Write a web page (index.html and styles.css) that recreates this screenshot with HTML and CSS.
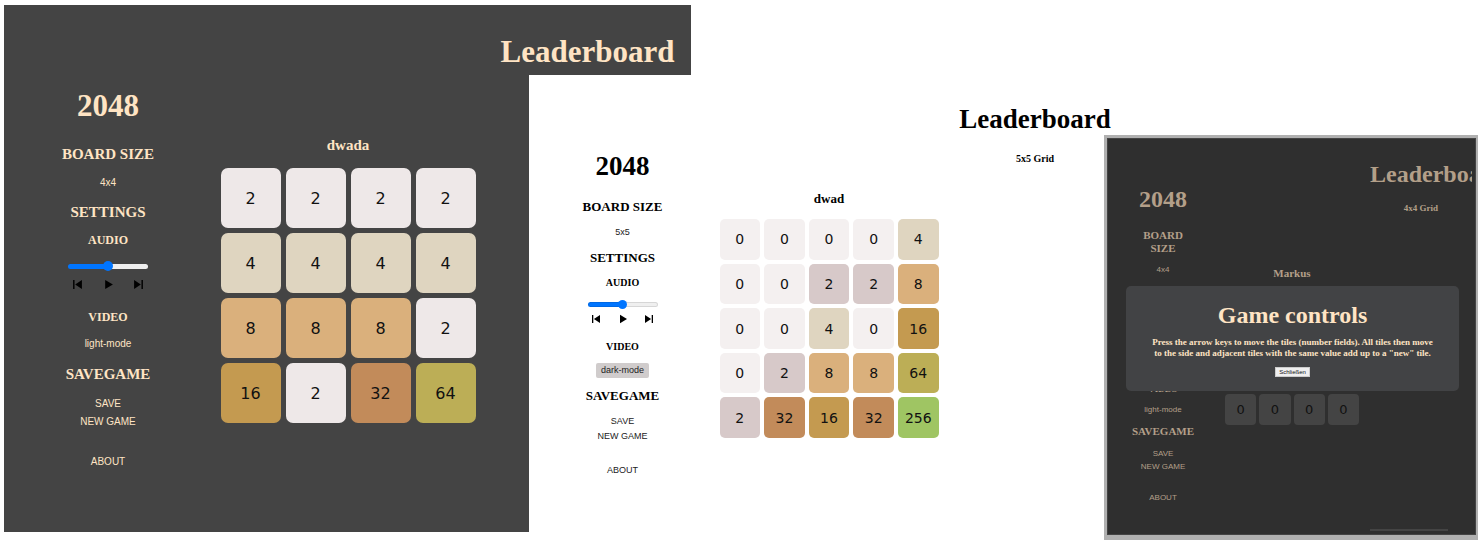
FILE: index.html
```html
<!DOCTYPE html>
<html lang="en">
<head>
<meta charset="utf-8">
<title>2048</title>
<link rel="stylesheet" href="styles.css">
</head>
<body>
<svg class="sprite" aria-hidden="true">
  <symbol id="prev" viewBox="0 0 10 10"><path d="M1 1h1.3v8H1zM9 1v8L2.9 5z"/></symbol>
  <symbol id="play" viewBox="0 0 10 10"><path d="M2 .8v8.4L9 5z"/></symbol>
  <symbol id="next" viewBox="0 0 10 10"><path d="M7.7 1H9v8H7.7zM1 1v8l6.1-4z"/></symbol>
</svg>
<main class="stage">
  <section class="window window-dark">
    <nav class="sidebar">
      <h1 class="title">2048</h1>
      <h2 class="heading first">BOARD SIZE</h2>
      <button class="item">4x4</button>
      <h2 class="heading">SETTINGS</h2>
      <h3 class="subheading">AUDIO</h3>
      <input class="volume" type="range" aria-label="Volume" value="50">
      <div class="player">
        <button class="control" aria-label="Previous"><svg class="icon"><use href="#prev"/></svg></button>
        <button class="control" aria-label="Play"><svg class="icon"><use href="#play"/></svg></button>
        <button class="control" aria-label="Next"><svg class="icon"><use href="#next"/></svg></button>
      </div>
      <h3 class="subheading video">VIDEO</h3>
      <button class="item">light-mode</button>
      <h2 class="heading savegame">SAVEGAME</h2>
      <button class="item save">SAVE</button>
      <button class="item follow">NEW GAME</button>
      <a class="item about" href="#about">ABOUT</a>
    </nav>
    <section class="game">
      <h2 class="player-name">dwada</h2>
      <div class="board size-4">
        <span class="tile t2">2</span><span class="tile t2">2</span><span class="tile t2">2</span><span class="tile t2">2</span>
        <span class="tile t4">4</span><span class="tile t4">4</span><span class="tile t4">4</span><span class="tile t4">4</span>
        <span class="tile t8">8</span><span class="tile t8">8</span><span class="tile t8">8</span><span class="tile t2">2</span>
        <span class="tile t16">16</span><span class="tile t2">2</span><span class="tile t32">32</span><span class="tile t64">64</span>
      </div>
    </section>
    <aside class="scores">
      <h1 class="title">Leaderboard</h1>
    </aside>
  </section>

  <section class="window window-light">
    <nav class="sidebar">
      <h1 class="title">2048</h1>
      <h2 class="heading first">BOARD SIZE</h2>
      <button class="item">5x5</button>
      <h2 class="heading">SETTINGS</h2>
      <h3 class="subheading">AUDIO</h3>
      <input class="volume" type="range" aria-label="Volume" value="50">
      <div class="player">
        <button class="control" aria-label="Previous"><svg class="icon"><use href="#prev"/></svg></button>
        <button class="control" aria-label="Play"><svg class="icon"><use href="#play"/></svg></button>
        <button class="control" aria-label="Next"><svg class="icon"><use href="#next"/></svg></button>
      </div>
      <h3 class="subheading video">VIDEO</h3>
      <button class="item hovered">dark-mode</button>
      <h2 class="heading savegame">SAVEGAME</h2>
      <button class="item save">SAVE</button>
      <button class="item follow">NEW GAME</button>
      <a class="item about" href="#about">ABOUT</a>
    </nav>
    <section class="game">
      <h2 class="player-name">dwad</h2>
      <div class="board size-5">
        <span class="tile t0">0</span><span class="tile t0">0</span><span class="tile t0">0</span><span class="tile t0">0</span><span class="tile t4">4</span>
        <span class="tile t0">0</span><span class="tile t0">0</span><span class="tile t2">2</span><span class="tile t2">2</span><span class="tile t8">8</span>
        <span class="tile t0">0</span><span class="tile t0">0</span><span class="tile t4">4</span><span class="tile t0">0</span><span class="tile t16">16</span>
        <span class="tile t0">0</span><span class="tile t2">2</span><span class="tile t8">8</span><span class="tile t8">8</span><span class="tile t64">64</span>
        <span class="tile t2">2</span><span class="tile t32">32</span><span class="tile t16">16</span><span class="tile t32">32</span><span class="tile t256">256</span>
      </div>
    </section>
    <aside class="scores">
      <h1 class="title">Leaderboard</h1>
      <h3 class="subheading">5x5 Grid</h3>
    </aside>
  </section>

  <section class="window window-dimmed">
    <nav class="sidebar">
      <h1 class="title">2048</h1>
      <h2 class="heading first">BOARD SIZE</h2>
      <button class="item">4x4</button>
      <h3 class="subheading video">VIDEO</h3>
      <button class="item">light-mode</button>
      <h2 class="heading savegame">SAVEGAME</h2>
      <button class="item save">SAVE</button>
      <button class="item follow">NEW GAME</button>
      <a class="item about" href="#about">ABOUT</a>
    </nav>
    <section class="game">
      <h2 class="player-name">Markus</h2>
      <div class="board size-4">
        <span class="tile t0"></span><span class="tile t0"></span><span class="tile t0"></span><span class="tile t0"></span>
        <span class="tile t0"></span><span class="tile t0"></span><span class="tile t0"></span><span class="tile t0"></span>
        <span class="tile t0"></span><span class="tile t0"></span><span class="tile t0"></span><span class="tile t0"></span>
        <span class="tile t0">0</span><span class="tile t0">0</span><span class="tile t0">0</span><span class="tile t0">0</span>
      </div>
    </section>
    <aside class="scores">
      <h1 class="title">Leaderboard</h1>
      <h3 class="subheading">4x4 Grid</h3>
      <div class="divider"></div>
    </aside>
    <dialog class="dialog" open aria-labelledby="dialog-title">
      <h1 class="title" id="dialog-title">Game controls</h1>
      <p class="dialog-text">Press the arrow keys to move the tiles (number fields). All tiles then move to the side and adjacent tiles with the same value add up to a "new" tile.</p>
      <button class="close">Schließen</button>
    </dialog>
  </section>
</main>
</body>
</html>
```
FILE: styles.css
```css
* { box-sizing: border-box; }

body {
  margin: 0;
  background: #fff;
  font-family: "Liberation Serif", "Times New Roman", serif;
}

h1, h2, h3, p { margin: 0; }

button {
  margin: 0;
  padding: 0;
  border: 0;
  background: none;
  color: inherit;
  font-family: "Liberation Sans", Arial, sans-serif;
}

.sprite { display: none; }

/* The three windows share one grid and overlap in its cells. */
.stage {
  display: grid;
  grid-template-columns: 4px minmax(0, 525fr) minmax(0, 162fr) minmax(0, 413fr) minmax(0, 374fr);
  grid-template-rows: 5px 70px 60px 1fr;
  min-height: 100vh;
}

.window {
  display: grid;
  align-items: start;
  color: var(--text);
  background: var(--page);
}

.window-dark {
  --text: #ffe4c4;
  --page: #444;
  --title: 31px; --title-line: 36px;
  --heading: 15px; --heading-line: 20px;
  --sub: 12px; --sub-line: 16px;
  --item: 10px; --item-line: 18px;
  --gap: 10px; --title-gap: 20px; --video-gap: 19px; --save-gap: 11px; --about-gap: 22px;
  --slider: 80px; --slider-line: 16px; --thumb: 10px; --track: 5px;
  --player: 72px; --player-gap: 5px; --icon: 11px;
  --tile: 16px; --tile-gap: 5px; --tile-radius: 7px; --board: 255px; --board-gap: 13px;
  grid-area: 2 / 2 / 5 / 4;
  grid-template-columns: 208fr 272fr 207fr;
  margin-bottom: 8px;
}

.window-light {
  --text: #000;
  --page: #fff;
  --title: 27px; --title-line: 30px;
  --heading: 13px; --heading-line: 18px;
  --sub: 10px; --sub-line: 14px;
  --item: 9px; --item-line: 15px;
  --gap: 9px; --title-gap: 17px; --video-gap: 16px; --save-gap: 9px; --about-gap: 19px;
  --slider: 70px; --slider-line: 12px; --thumb: 9px; --track: 5px;
  --player: 63px; --player-gap: 4px; --icon: 10px;
  --tile: 14px; --tile-gap: 4px; --tile-radius: 5px; --board: 219px; --board-gap: 11px;
  grid-area: 3 / 3 / 5 / 6;
  grid-template-columns: 187fr 226fr 186fr 350fr;
}

.window-dimmed {
  --text: #b39f89;
  --page: #2f2f2f;
  --title: 24px; --title-line: 28px;
  --heading: 11px; --heading-line: 13px;
  --sub: 9px; --sub-line: 12px;
  --item: 8px; --item-line: 13px;
  --gap: 8px; --title-gap: 16px; --video-gap: 107px; --save-gap: 9px; --about-gap: 18px;
  --tile: 13px; --tile-gap: 3px; --tile-radius: 4px; --board: 134px; --board-gap: 11px;
  position: relative;
  grid-area: 4 / 5 / 5 / 6;
  grid-template-columns: 112fr 146fr 111fr;
  border: solid #b0b0b0;
  border-width: 3px 2px 5px 3px;
  box-shadow: inset 0 0 0 1px #444;
}

.sidebar {
  display: flex;
  flex-direction: column;
  align-items: center;
  text-align: center;
}

.window-dark .sidebar { padding-top: 83px; }
.window-light .sidebar { padding-top: 76px; }
.window-dimmed .sidebar { padding: 47px 24px 0; }

.title { font-size: var(--title); line-height: var(--title-line); white-space: nowrap; }
.heading { margin-top: var(--gap); font-size: var(--heading); line-height: var(--heading-line); }
.heading.first { margin-top: var(--title-gap); }
.heading.savegame { margin-top: var(--save-gap); }
.subheading { margin-top: var(--gap); font-size: var(--sub); line-height: var(--sub-line); }
.subheading.video { margin-top: var(--video-gap); }

.item {
  margin-top: var(--gap);
  font-family: "Liberation Sans", Arial, sans-serif;
  font-size: var(--item);
  line-height: var(--item-line);
  color: inherit;
  text-decoration: none;
  white-space: nowrap;
}
.item.save { margin-top: var(--save-gap); }
.item.follow { margin-top: 0; }
.item.about { margin-top: var(--about-gap); }
.item.hovered { padding: 0 5px; border-radius: 2px; background: #d0cccc; }

.window-light .item { color: #222; }

.volume {
  appearance: none;
  width: var(--slider);
  height: var(--slider-line);
  margin: var(--gap) 0 0;
  background: none;
}
.window-light .volume { margin-top: 8px; }
.volume::-webkit-slider-runnable-track {
  height: var(--track);
  border-radius: 3px;
  background: linear-gradient(90deg, #0075ff 50%, #efefef 50%);
}
.window-light .volume::-webkit-slider-runnable-track {
  box-shadow: inset 0 0 0 1px #0000001a;
}
.volume::-webkit-slider-thumb {
  appearance: none;
  width: var(--thumb);
  height: var(--thumb);
  margin-top: calc((var(--track) - var(--thumb)) / 2);
  border-radius: 50%;
  background: #0075ff;
}

.player {
  display: flex;
  justify-content: space-between;
  width: var(--player);
  margin-top: var(--player-gap);
  color: #000;
}
.control { display: flex; }
.icon { width: var(--icon); height: var(--icon); fill: currentColor; }

.game {
  display: flex;
  flex-direction: column;
  align-items: center;
}
.window-dark .game { padding-top: 130px; }
.window-light .game { padding-top: 115px; }
.window-dimmed .game { padding-top: 129px; }

.player-name { font-size: var(--heading); line-height: var(--heading-line); }

.board {
  display: grid;
  gap: var(--tile-gap);
  width: var(--board);
  margin-top: var(--board-gap);
}
.size-4 { grid-template-columns: repeat(4, 1fr); }
.size-5 { grid-template-columns: repeat(5, 1fr); }

.tile {
  display: flex;
  align-items: center;
  justify-content: center;
  aspect-ratio: 1;
  border-radius: var(--tile-radius);
  color: #111;
  font-family: "DejaVu Sans", Verdana, sans-serif;
  font-size: var(--tile);
}
.t0 { background: #f4f0f0; }
.t2 { background: #d7c9c9; }
.t4 { background: #dfd5c0; }
.t8 { background: #dab07c; }
.t16 { background: #c49a50; }
.t32 { background: #c28b5a; }
.t64 { background: #bcae56; }
.t256 { background: #9fc563; }
.window-dark .t2 { background: #eee8e8; }
.window-dimmed .t0 { background: #444; }

.scores { text-align: center; }
.window-dark .scores { padding: 29px 15px 0; }
.window-light .scores { padding-top: 29px; }
.window-light .scores .subheading { margin-top: 18px; }
.window-dimmed .scores {
  display: flex;
  flex-direction: column;
  align-self: stretch;
  margin: 0 4px 0 5px;
  padding: 22px 0 4px;
  overflow: hidden;
}
.window-dimmed .scores .subheading { margin-top: 14px; }
.divider { width: 78px; height: 2px; margin-top: auto; background: #444; }

.dialog {
  position: absolute;
  inset: 148px 17px auto 19px;
  width: auto;
  margin: 0;
  padding: 15px 24px 14px;
  border: 0;
  border-radius: 5px;
  background: #424345;
  color: #ffe4c4;
  text-align: center;
}
.dialog-text {
  margin-top: 8px;
  font-size: 9px;
  font-weight: bold;
  line-height: 11px;
}
.close {
  display: block;
  margin: 8px auto 0;
  padding: 0 3px;
  border: 1px solid #ccc;
  background: #efefef;
  color: #111;
  font-size: 6px;
  line-height: 8px;
}
```
